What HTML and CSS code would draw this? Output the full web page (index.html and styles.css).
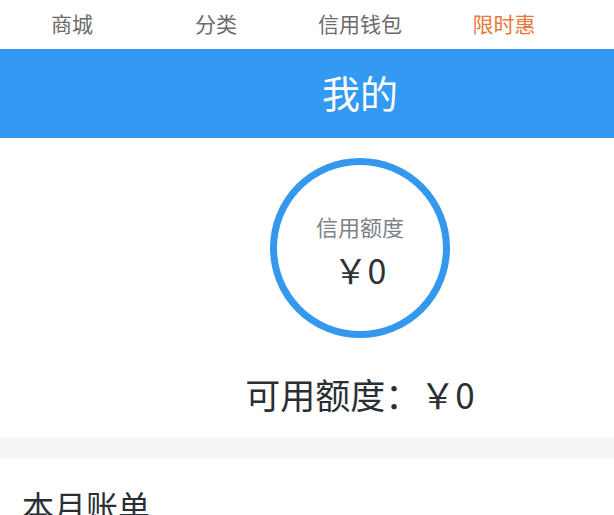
FILE: index.html
```html
<!DOCTYPE html>
<html lang="zh-CN">
<head>
<meta charset="utf-8">
<title>我的</title>
<link rel="stylesheet" href="styles.css">
</head>
<body>
<div class="page">
  <nav class="tabs">
    <div class="tab">商城</div>
    <div class="tab">分类</div>
    <div class="tab">信用钱包</div>
    <div class="tab tab-active">限时惠</div>
  </nav>
  <header class="title-bar">我的</header>
  <section class="credit">
    <div class="ring">
      <div class="ring-label">信用额度</div>
      <div class="ring-value">￥0</div>
    </div>
    <div class="available">可用额度：￥0</div>
  </section>
  <div class="divider"></div>
  <section class="bill">
    <h2 class="bill-title">本月账单</h2>
  </section>
</div>
</body>
</html>
```

FILE: styles.css
```css
html, body {
  margin: 0;
  padding: 0;
  background: #ffffff;
  overflow: hidden;
}
body {
  font-family: "Noto Sans CJK SC", "Noto Sans", sans-serif;
}
.page {
  width: 720px;
}
.tabs {
  display: flex;
  height: 49px;
  background: #ffffff;
}
.tab {
  width: 144px;
  text-align: center;
  font-size: 21px;
  line-height: 46px;
  color: #6b6b6b;
}
.tab-active {
  color: #e8793a;
}
.title-bar {
  height: 89px;
  background: #3399f3;
  color: #ffffff;
  font-size: 38px;
  line-height: 85px;
  text-align: center;
}
.credit {
  display: flex;
  flex-direction: column;
  align-items: center;
  padding-top: 20px;
  padding-bottom: 19px;
}
.ring {
  width: 180px;
  height: 180px;
  box-sizing: border-box;
  border: 7px solid #3398ee;
  border-radius: 50%;
  display: flex;
  flex-direction: column;
  align-items: center;
  padding-top: 46px;
}
.ring-label {
  font-size: 22px;
  line-height: 30px;
  color: #7b8288;
}
.ring-value {
  margin-top: 7px;
  font-size: 34px;
  line-height: 44px;
  color: #2e3338;
}
.available {
  margin-top: 31px;
  font-size: 35px;
  line-height: 50px;
  color: #2a2f33;
}
.divider {
  height: 20px;
  background: #f4f4f4;
}
.bill {
  padding: 23px 22px 0;
}
.bill-title {
  margin: 0;
  font-size: 32px;
  font-weight: normal;
  line-height: 48px;
  color: #2a2f33;
}
```
